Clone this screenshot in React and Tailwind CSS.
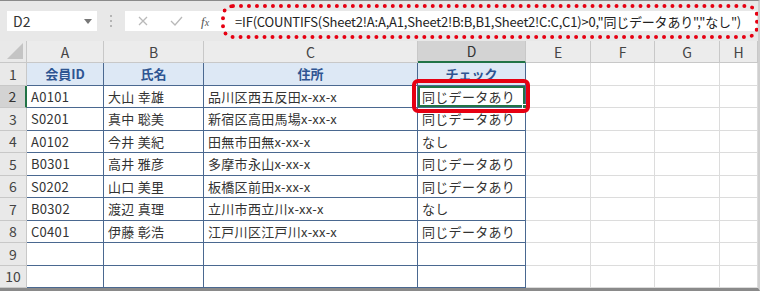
import React from "react";

const jp = "font-['Noto_Sans_CJK_JP','Noto_Sans',sans-serif]";

const rows = [
  ["A0101", "大山 幸雄", "品川区西五反田x-xx-x", "同じデータあり"],
  ["S0201", "真中 聡美", "新宿区高田馬場x-xx-x", "同じデータあり"],
  ["A0102", "今井 美紀", "田無市田無x-xx-x", "なし"],
  ["B0301", "高井 雅彦", "多摩市永山x-xx-x", "同じデータあり"],
  ["S0202", "山口 美里", "板橋区前田x-xx-x", "同じデータあり"],
  ["B0302", "渡辺 真理", "立川市西立川x-xx-x", "なし"],
  ["C0401", "伊藤 彰浩", "江戸川区江戸川x-xx-x", "同じデータあり"],
  ["", "", "", ""],
  ["", "", "", ""],
];

const letters = ["A", "B", "C", "D", "E", "F", "G", "H"];

function Toolbar() {
  return (
    <div className="relative flex h-[40px] shrink-0 items-center pl-[7px] pr-[1px]">
      <div className="flex h-[20px] w-[90px] shrink-0 items-center justify-between bg-white pl-[6px] pr-[5px] text-[14px] leading-none text-[#333]">
        <span>D2</span>
        <svg width="8" height="5" viewBox="0 0 8 5">
          <path d="M0 0h8L4 5z" fill="#777" />
        </svg>
      </div>
      <div className="flex w-[28px] shrink-0 flex-col items-center gap-[3px]">
        <span className="h-[2px] w-[2px] bg-[#b5b5b5]" />
        <span className="h-[2px] w-[2px] bg-[#b5b5b5]" />
        <span className="h-[2px] w-[2px] bg-[#b5b5b5]" />
      </div>
      <div className="flex h-[20px] min-w-0 flex-1 items-center overflow-hidden bg-white">
        <svg className="ml-[13px] shrink-0" width="10" height="10" viewBox="0 0 10 10">
          <path d="M1 1l8 8M9 1l-8 8" stroke="#b9b9b9" strokeWidth="1.3" />
        </svg>
        <svg className="ml-[22px] shrink-0" width="13" height="10" viewBox="0 0 13 10">
          <path d="M1 5l4 4 7-8" stroke="#b9b9b9" strokeWidth="1.3" fill="none" />
        </svg>
        <span className="ml-[18px] shrink-0 font-['Liberation_Serif',serif] text-[13px] italic leading-none text-[#555]">
          f<span className="text-[10px]">x</span>
        </span>
        <span className={`ml-[26px] shrink-0 ${jp} text-[13px] leading-none tracking-[-0.2px] whitespace-nowrap text-[#222]`}>
          =IF(COUNTIFS(Sheet2!A:A,A1,Sheet2!B:B,B1,Sheet2!C:C,C1)&gt;0,"同じデータあり","なし")
        </span>
      </div>
      <div className="pointer-events-none absolute left-[221px] top-[3px] h-[35px] w-[538px] rounded-[12px] border-[4px] border-dotted border-[#e60012]" />
    </div>
  );
}

function Corner() {
  return (
    <div className="flex items-end justify-end border-r border-b border-[#c8c8c8] bg-[#e9e9e9] pb-[3px] pr-[3px]">
      <svg width="16" height="16" viewBox="0 0 16 16">
        <path d="M16 0V16H0z" fill="#c4c4c4" />
      </svg>
    </div>
  );
}

export default function App() {
  return (
    <div className={`flex h-[291px] w-[760px] flex-col overflow-hidden border-t border-t-[#8a8a8a] border-b-[3px] border-b-[#8a8a8a] border-r-2 border-r-[#cfcfcf] bg-[#e8e8e8] leading-none ${jp}`}>
      <Toolbar />
      <div className="grid h-[247px] min-h-0 shrink-0 grid-cols-[27px_77px_100px_214px_108px_65px_64px_65px_1fr] grid-rows-[22px_repeat(10,minmax(0,1fr))] bg-white">
        <Corner />
        {letters.map((l) => (
          <div
            key={l}
            className={
              l === "D"
                ? "flex items-center justify-center border-r border-b-2 border-r-[#c8c8c8] border-b-[#217346] bg-[#d3d3d3] text-[14px] text-[#333]"
                : "flex items-center justify-center border-r border-b border-[#c8c8c8] bg-[#ececec] text-[14px] text-[#444]"
            }
          >
            {l}
          </div>
        ))}

        {/* row 1: table header */}
        <div className="flex items-center justify-center border-r border-b border-[#c8c8c8] bg-[#e9e9e9] text-[14px] text-[#444]">1</div>
        {["会員ID", "氏名", "住所", "チェック"].map((h) => (
          <div
            key={h}
            className="flex items-center justify-center border-r border-b border-[#4a6890] bg-[#dde8f5] text-[13px] font-bold text-[#2e5592]"
          >
            {h}
          </div>
        ))}
        {[0, 1, 2, 3].map((i) => (
          <div key={i} className="border-r border-b border-[#dcdcdc]" />
        ))}

        {rows.map((r, ri) => {
          const n = ri + 2;
          return (
            <React.Fragment key={n}>
              <div
                className={
                  n === 2
                    ? "flex items-center justify-center border-r-2 border-b border-r-[#217346] border-b-[#c8c8c8] bg-[#d3d3d3] text-[14px] text-[#333]"
                    : "flex items-center justify-center border-r border-b border-[#c8c8c8] bg-[#e9e9e9] text-[14px] text-[#444]"
                }
              >
                {n}
              </div>
              {r.map((v, ci) =>
                n === 2 && ci === 3 ? (
                  <div key={ci} className="relative flex items-center border-r border-b border-[#4a6890]">
                    <div className="flex h-full w-full items-center border-2 border-[#217346] pl-[2px] text-[13px] tracking-[0.3px] text-[#333]">
                      {v}
                    </div>
                    <span className="absolute bottom-[-2px] right-[-2px] h-[5px] w-[5px] border border-white bg-[#217346]" />
                    <div className="pointer-events-none absolute -left-[6px] -top-[7px] -right-[5px] -bottom-[6px] rounded-[6px] border-[4px] border-[#e60012]" />
                  </div>
                ) : (
                  <div
                    key={ci}
                    className="flex items-center overflow-hidden whitespace-nowrap border-r border-b border-[#4a6890] pl-[4px] text-[13px] tracking-[0.3px] text-[#333]"
                  >
                    {v}
                  </div>
                )
              )}
              {[0, 1, 2, 3].map((i) => (
                <div key={i} className="border-r border-b border-[#dcdcdc]" />
              ))}
            </React.Fragment>
          );
        })}
      </div>
    </div>
  );
}
